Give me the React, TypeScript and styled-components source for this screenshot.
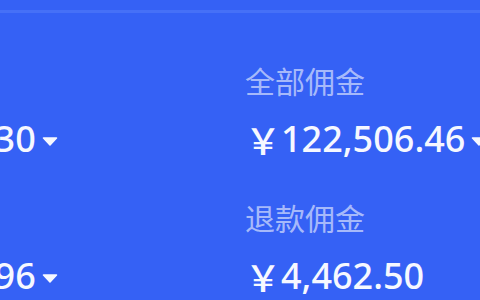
import React from "react";
import styled, { createGlobalStyle } from "styled-components";

const GlobalStyle = createGlobalStyle`
  html, body {
    margin: 0;
    padding: 0;
    width: 480px;
    height: 300px;
    overflow: hidden;
    background: #3561f5;
  }
  #root {
    width: 480px;
    height: 300px;
    overflow: hidden;
  }
`;

const Page = styled.div`
  width: 480px;
  height: 300px;
  background: #3561f5;
  overflow: hidden;
  display: flex;
  flex-direction: column;
`;

const Divider = styled.div`
  height: 3px;
  margin-top: 10px;
  background: #4670f7;
  flex-shrink: 0;
`;

const Grid = styled.div`
  display: grid;
  grid-template-columns: repeat(2, 409px);
  row-gap: 33px;
  margin-left: -164px;
  padding-top: 47px;
`;

const Cell = styled.div`
  display: flex;
  flex-direction: column;
  gap: 14px;
`;

const Label = styled.div`
  font-family: "Noto Sans CJK SC", "Noto Sans", sans-serif;
  font-size: 30px;
  line-height: 40px;
  color: rgba(255, 255, 255, 0.58);
  white-space: nowrap;
`;

const Value = styled.div`
  display: flex;
  align-items: center;
  font-family: "Noto Sans", "Noto Sans CJK SC", sans-serif;
  font-weight: 500;
  font-size: 36px;
  line-height: 50px;
  color: #f6f8ff;
  white-space: nowrap;
`;

const Yen = styled.span`
  font-family: "Noto Sans CJK SC", sans-serif;
  font-weight: 500;
`;

const Caret = styled.svg`
  width: 16px;
  height: 9px;
  margin-left: 6px;
  margin-top: 4px;
  flex-shrink: 0;
`;

const DownCaret = () => (
  <Caret viewBox="0 0 16 9">
    <path d="M1.5 1 L14.5 1 L8 8 Z" fill="#f6f8ff" stroke="#f6f8ff" strokeWidth="1.5" strokeLinejoin="round" />
  </Caret>
);

type Item = { label: string; amount: string; dropdown: boolean };

const items: Item[] = [
  { label: "订单金额", amount: "12,345.30", dropdown: true },
  { label: "全部佣金", amount: "122,506.46", dropdown: true },
  { label: "退款金额", amount: "10,548.96", dropdown: true },
  { label: "退款佣金", amount: "4,462.50", dropdown: false },
];

export default function App() {
  return (
    <>
      <GlobalStyle />
      <Page>
        <Divider />
        <Grid>
          {items.map((it) => (
            <Cell key={it.label}>
              <Label>{it.label}</Label>
              <Value>
                <Yen>￥</Yen>
                {it.amount}
                {it.dropdown && <DownCaret />}
              </Value>
            </Cell>
          ))}
        </Grid>
      </Page>
    </>
  );
}
